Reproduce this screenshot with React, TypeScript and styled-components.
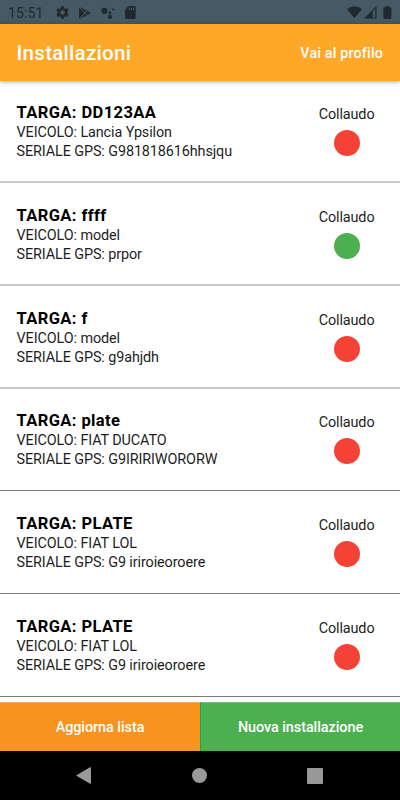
import React from "react";
import styled, { createGlobalStyle } from "styled-components";

const GlobalStyle = createGlobalStyle`
  * { box-sizing: border-box; }
  body { margin: 0; background: #fff; font-family: Roboto, "Liberation Sans", sans-serif; }
`;

const Screen = styled.div`
  width: 400px;
  height: 800px;
  display: flex;
  flex-direction: column;
  overflow: hidden;
  background: #fff;
`;

const StatusBar = styled.div`
  height: 24px;
  flex: none;
  display: flex;
  align-items: center;
  justify-content: space-between;
  padding: 1px 8px 0 8px;
  background: #455a64;
  color: #20292e;
`;

const StatusGroup = styled.div`
  display: flex;
  align-items: center;
`;

const Clock = styled.span`
  width: 47px;
  font-size: 14px;
  line-height: 24px;
  letter-spacing: 0.1px;
  white-space: nowrap;
`;

const Glyph = styled.svg<{ $gap?: number }>`
  display: block;
  flex: none;
  fill: currentColor;
  margin-left: ${(p) => p.$gap ?? 0}px;
`;

const AppBar = styled.header`
  height: 57px;
  flex: none;
  display: flex;
  align-items: center;
  justify-content: space-between;
  padding: 0 17px 0 16.5px;
  background: #ffa726;
  color: #fff;
  box-shadow: 0 1px 4px rgba(0, 0, 0, 0.35);
  z-index: 1;
`;

const Title = styled.h1`
  margin: 0;
  font-size: 20.6px;
  font-weight: 500;
  line-height: 24px;
  letter-spacing: 0.25px;
`;

const ProfileLink = styled.button`
  border: 0;
  padding: 2px 0 0;
  background: none;
  color: inherit;
  font: 500 14.4px/20px Roboto, sans-serif;
  letter-spacing: 0.14px;
`;

const List = styled.main`
  flex: 1;
  min-height: 0;
  overflow: hidden;
`;

const Row = styled.article<{ $height: number; $soft: boolean; $top: number }>`
  height: ${(p) => p.$height}px;
  display: flex;
  justify-content: space-between;
  padding: ${(p) => p.$top}px 25.5px 0 16.5px;
  border-bottom: ${(p) => (p.$soft ? "2px solid #c8c8c8" : "1px solid #7b7b7b")};
`;

const Details = styled.div`
  display: flex;
  flex-direction: column;
`;

const Plate = styled.div`
  font-size: 16.5px;
  font-weight: 700;
  line-height: 21px;
  margin-bottom: 1px;
  letter-spacing: 0.4px;
  color: #000;
`;

const Line = styled.div`
  font-size: 14.4px;
  line-height: 18.6px;
  letter-spacing: -0.1px;
  color: #1e1e1e;
`;

const Check = styled.div`
  display: flex;
  flex-direction: column;
  align-items: center;
  padding-top: 4px;
`;

const Dot = styled.span<{ $passed: boolean }>`
  width: 26px;
  height: 26px;
  margin-top: 5px;
  border-radius: 50%;
  background: ${(p) => (p.$passed ? "#4caf50" : "#f44336")};
`;

const Actions = styled.div`
  height: 49px;
  flex: none;
  display: grid;
  grid-template-columns: 1fr 1fr;
`;

const Action = styled.button<{ $kind: "refresh" | "create" }>`
  border: 0;
  border-top: 1px solid ${(p) => (p.$kind === "create" ? "#79bd7b" : "#f6a855")};
  border-left: ${(p) => (p.$kind === "create" ? "1px solid #00b15c" : "0")};
  padding: 2px 0 0;
  background: ${(p) => (p.$kind === "create" ? "#4caf50" : "#f7931e")};
  color: #fff;
  font: 500 14.4px/20px Roboto, sans-serif;
  letter-spacing: -0.05px;
`;

const NavBar = styled.nav`
  height: 49px;
  flex: none;
  display: flex;
  align-items: center;
  justify-content: space-between;
  padding: 0 77px 0 76px;
  background: #000;
  color: #999;
`;

const items = [
  { plate: "DD123AA", vehicle: "Lancia Ypsilon", serial: "G981818616hhsjqu", passed: false, height: 102, soft: true, top: 21 },
  { plate: "ffff", vehicle: "model", serial: "prpor", passed: true, height: 103, soft: true, top: 22 },
  { plate: "f", vehicle: "model", serial: "g9ahjdh", passed: false, height: 103, soft: true, top: 22 },
  { plate: "plate", vehicle: "FIAT DUCATO", serial: "G9IRIRIWORORW", passed: false, height: 102, soft: false, top: 21 },
  { plate: "PLATE", vehicle: "FIAT LOL", serial: "G9 iriroieoroere", passed: false, height: 103, soft: false, top: 22 },
  { plate: "PLATE", vehicle: "FIAT LOL", serial: "G9 iriroieoroere", passed: false, height: 103, soft: false, top: 22 },
];

export default function App() {
  return (
    <>
      <GlobalStyle />
      <Screen>
        <StatusBar>
          <StatusGroup>
            <Clock>15:51</Clock>
            <Glyph width="15" height="15" viewBox="0 0 24 24">
              <path d="M19.43 12.98c.04-.32.07-.64.07-.98s-.03-.66-.07-.98l2.11-1.65c.19-.15.24-.42.12-.64l-2-3.46c-.12-.22-.39-.3-.61-.22l-2.49 1c-.52-.4-1.08-.73-1.69-.98l-.38-2.65C14.46 2.18 14.25 2 14 2h-4c-.25 0-.46.18-.49.42l-.38 2.65c-.61.25-1.17.59-1.69.98l-2.49-1c-.23-.09-.49 0-.61.22l-2 3.46c-.13.22-.07.49.12.64l2.11 1.65c-.04.32-.07.65-.07.98s.03.66.07.98l-2.11 1.65c-.19.15-.24.42-.12.64l2 3.46c.12.22.39.3.61.22l2.49-1c.52.4 1.08.73 1.69.98l.38 2.65c.03.24.24.42.49.42h4c.25 0 .46-.18.49-.42l.38-2.65c.61-.25 1.17-.59 1.69-.98l2.49 1c.23.09.49 0 .61-.22l2-3.46c.12-.22.07-.49-.12-.64l-2.11-1.65zM12 15.5c-1.93 0-3.5-1.57-3.5-3.5s1.57-3.5 3.5-3.5 3.5 1.57 3.5 3.5-1.57 3.5-3.5 3.5z" />
            </Glyph>
            <Glyph $gap={9} width="12" height="12" viewBox="0 0 12 12">
              <path d="M0 .3v11.4L5.2 6zM.8 0l5 5.3L7.8 3.8zM.8 12l5-5.3 2 1.5zM6.4 6l2.1-1.9L12 6 8.5 7.9z" />
            </Glyph>
            <Glyph $gap={9.5} width="14" height="12" viewBox="0 0 14 12">
              <circle cx="3.4" cy="3.8" r="3.1" />
              <circle cx="8.8" cy="5.7" r="1.5" />
              <circle cx="12.2" cy="2.4" r="1" />
              <circle cx="9" cy="9.9" r="2.1" />
            </Glyph>
            <Glyph $gap={10.5} width="11" height="13" viewBox="0 0 11 13">
              <path
                fillRule="evenodd"
                d="M3.7 0H9.6Q10.7 0 10.7 1.2V11.6Q10.7 12.9 9.6 12.9H1.2Q0 12.9 0 11.6V3.8zM3.8 1.8V4.2H4.9V1.8zM5.9 1.8V4.2H7V1.8zM8 1.8V4.2H9.1V1.8z"
              />
            </Glyph>
          </StatusGroup>
          <StatusGroup>
            <Glyph width="15" height="13" viewBox="0 0 15 13">
              <path d="M0 3.1Q7.5-2.4 15 3.1L7.5 12.3z" />
            </Glyph>
            <Glyph $gap={1.5} width="13" height="13" viewBox="0 0 13 13">
              <path fillRule="evenodd" d="M12.5 0V12.6H0zM8.7 5.2V11.4H11.3V2.6z" />
            </Glyph>
            <Glyph $gap={6.5} width="9" height="13" viewBox="0 0 9 13">
              <path d="M2.7 0H6.1V1.3H7.6Q8.4 1.3 8.4 2.1V12.1Q8.4 12.9 7.6 12.9H1.2Q.4 12.9.4 12.1V2.1Q.4 1.3 1.2 1.3H2.7z" />
            </Glyph>
          </StatusGroup>
        </StatusBar>
        <AppBar>
          <Title>Installazioni</Title>
          <ProfileLink>Vai al profilo</ProfileLink>
        </AppBar>
        <List>
          {items.map((item, i) => (
            <Row key={i} $height={item.height} $soft={item.soft} $top={item.top}>
              <Details>
                <Plate>TARGA: {item.plate}</Plate>
                <Line>VEICOLO: {item.vehicle}</Line>
                <Line>SERIALE GPS: {item.serial}</Line>
              </Details>
              <Check>
                <Line>Collaudo</Line>
                <Dot $passed={item.passed} />
              </Check>
            </Row>
          ))}
        </List>
        <Actions>
          <Action $kind="refresh">Aggiorna lista</Action>
          <Action $kind="create">Nuova installazione</Action>
        </Actions>
        <NavBar>
          <Glyph width="15" height="17" viewBox="0 0 15 17">
            <path d="M14 .3Q15-.1 15 1V16Q15 17.1 14 16.7L.8 9.1Q0 8.5.8 7.9z" />
          </Glyph>
          <Glyph width="15" height="15" viewBox="0 0 15 15">
            <circle cx="7.5" cy="7.5" r="7.5" />
          </Glyph>
          <Glyph width="16" height="16" viewBox="0 0 16 16">
            <rect width="16" height="16" rx="1" />
          </Glyph>
        </NavBar>
      </Screen>
    </>
  );
}
